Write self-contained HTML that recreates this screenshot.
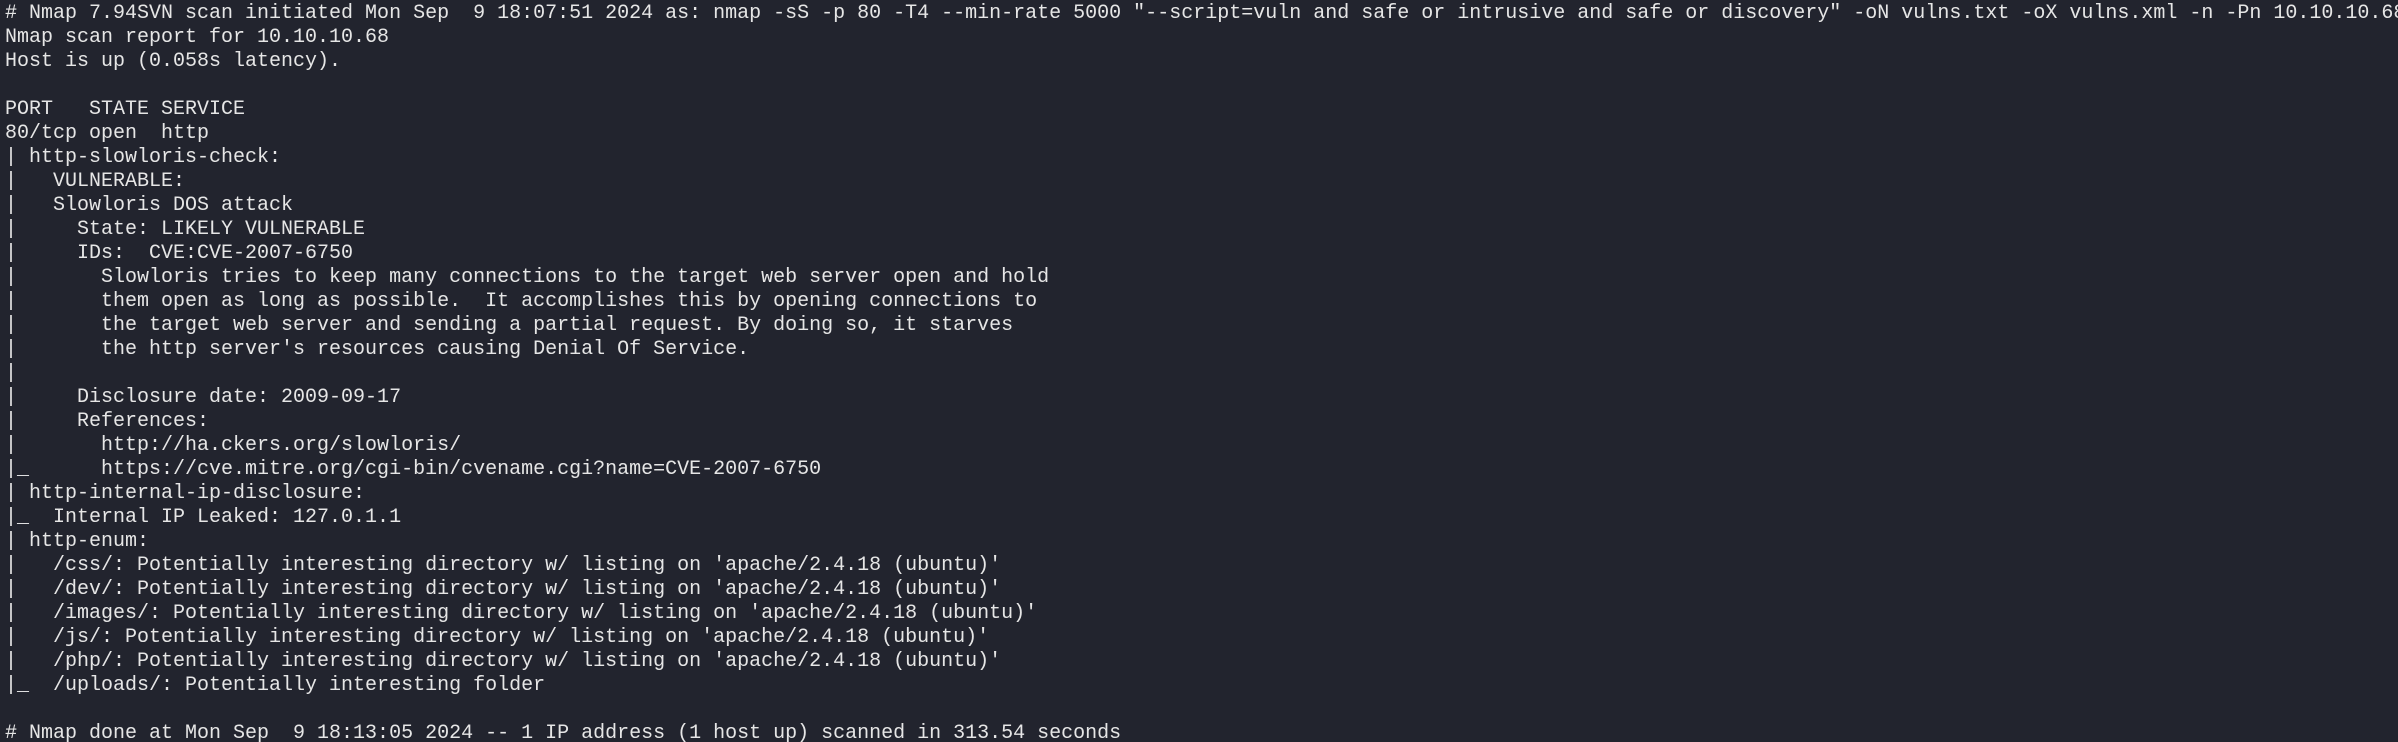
<!DOCTYPE html>
<html><head><meta charset="utf-8"><style>
html,body{margin:0;padding:0;background:#22242e;width:2398px;height:742px;overflow:hidden}
pre{margin:0;padding:2px 0 0 5px;font-family:"Liberation Mono","DejaVu Sans Mono",monospace;font-size:20px;line-height:24px;color:#e6e6e6;white-space:pre}
</style></head><body><pre># Nmap 7.94SVN scan initiated Mon Sep  9 18:07:51 2024 as: nmap -sS -p 80 -T4 --min-rate 5000 "--script=vuln and safe or intrusive and safe or discovery" -oN vulns.txt -oX vulns.xml -n -Pn 10.10.10.68
Nmap scan report for 10.10.10.68
Host is up (0.058s latency).

PORT   STATE SERVICE
80/tcp open  http
| http-slowloris-check: 
|   VULNERABLE:
|   Slowloris DOS attack
|     State: LIKELY VULNERABLE
|     IDs:  CVE:CVE-2007-6750
|       Slowloris tries to keep many connections to the target web server open and hold
|       them open as long as possible.  It accomplishes this by opening connections to
|       the target web server and sending a partial request. By doing so, it starves
|       the http server's resources causing Denial Of Service.
|       
|     Disclosure date: 2009-09-17
|     References:
|       http://ha.ckers.org/slowloris/
|_      https://cve.mitre.org/cgi-bin/cvename.cgi?name=CVE-2007-6750
| http-internal-ip-disclosure: 
|_  Internal IP Leaked: 127.0.1.1
| http-enum: 
|   /css/: Potentially interesting directory w/ listing on 'apache/2.4.18 (ubuntu)'
|   /dev/: Potentially interesting directory w/ listing on 'apache/2.4.18 (ubuntu)'
|   /images/: Potentially interesting directory w/ listing on 'apache/2.4.18 (ubuntu)'
|   /js/: Potentially interesting directory w/ listing on 'apache/2.4.18 (ubuntu)'
|   /php/: Potentially interesting directory w/ listing on 'apache/2.4.18 (ubuntu)'
|_  /uploads/: Potentially interesting folder

# Nmap done at Mon Sep  9 18:13:05 2024 -- 1 IP address (1 host up) scanned in 313.54 seconds</pre></body></html>
